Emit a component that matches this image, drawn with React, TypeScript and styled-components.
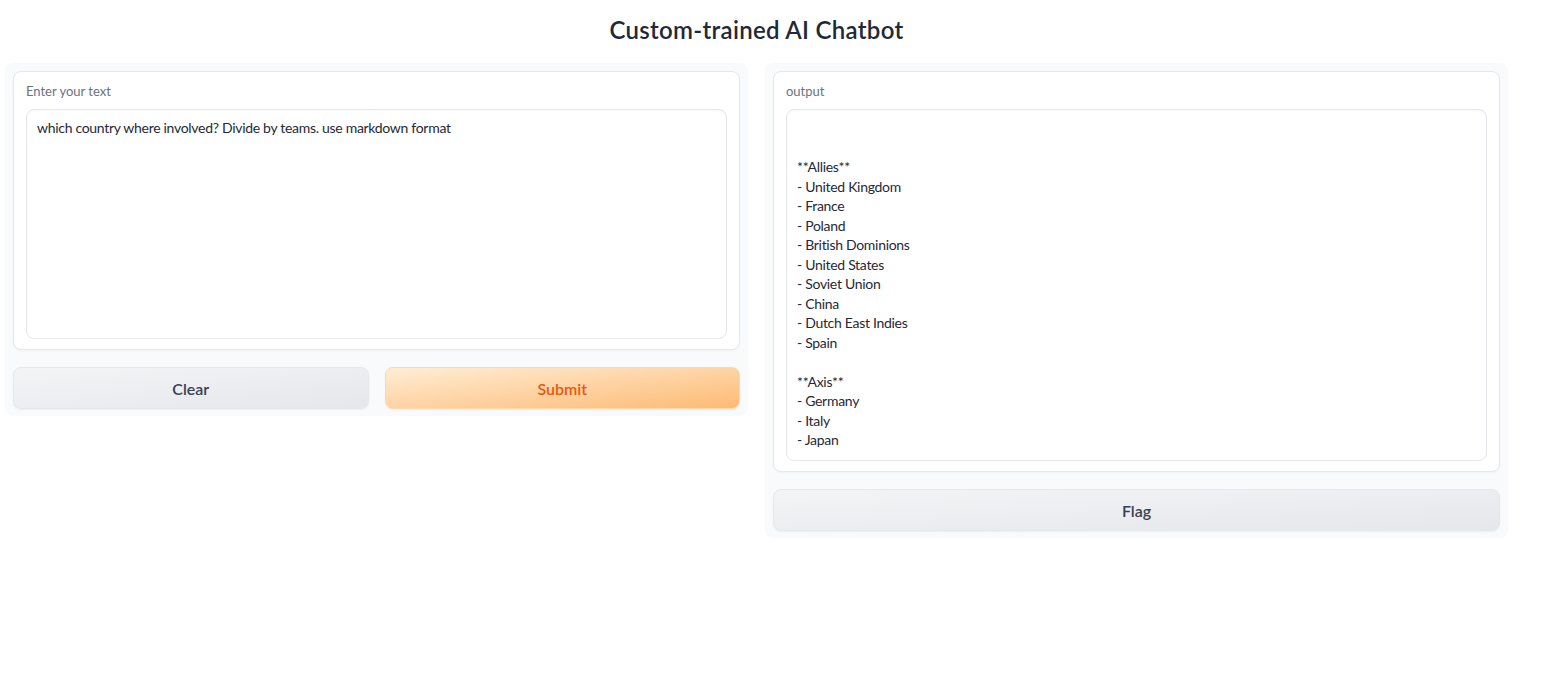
import React from "react";
import styled, { createGlobalStyle } from "styled-components";

const GlobalStyle = createGlobalStyle`
  html, body { margin: 0; padding: 0; background: #ffffff; }
  body {
    font-family: Lato, "Noto Sans", "Liberation Sans", sans-serif;
    color: #1f2937;
    -webkit-font-smoothing: antialiased;
  }
  * { box-sizing: border-box; }
`;

const Container = styled.div`
  width: 1503px;
  margin-left: 5px;
  padding-top: 14px;
  display: flex;
  flex-direction: column;
`;

const Title = styled.h1`
  margin: 0 0 18px;
  text-align: center;
  font-size: 24px;
  line-height: 31px;
  font-weight: 600;
  letter-spacing: 0.3px;
  color: #1f2937;
`;

const Columns = styled.div`
  display: grid;
  grid-template-columns: 1fr 1fr;
  gap: 17px;
  align-items: start;
`;

const Panel = styled.div`
  background: #f9fafb;
  border-radius: 8px;
  padding: 8px 8px 7px;
  display: flex;
  flex-direction: column;
  gap: 17px;
`;

const Block = styled.div`
  background: #ffffff;
  border: 1px solid #e5e7eb;
  border-radius: 8px;
  padding: 9px 12px 10px;
  box-shadow: 0 1px 2px rgba(0, 0, 0, 0.03);
  display: flex;
  flex-direction: column;
  gap: 8px;
`;

const Label = styled.span`
  font-size: 13px;
  line-height: 20px;
  color: #6b7280;
`;

const TextBox = styled.div<{ $height: number }>`
  height: ${(p) => p.$height}px;
  border: 1px solid #e5e7eb;
  border-radius: 8px;
  padding: 8px 10px;
  font-size: 14px;
  line-height: 19.5px;
  letter-spacing: -0.3px;
  color: #1f2937;
  white-space: pre-wrap;
  background: #ffffff;
  box-shadow: inset 0 1px 2px rgba(0, 0, 0, 0.04);
  overflow: hidden;
`;

const ButtonRow = styled.div`
  display: grid;
  grid-template-columns: 1fr 1fr;
  gap: 16px;
`;

const Button = styled.button<{ $primary?: boolean }>`
  height: 42px;
  border-radius: 8px;
  font-family: inherit;
  font-size: 16px;
  font-weight: 600;
  cursor: pointer;
  border: 1px solid ${(p) => (p.$primary ? "#fed7aa" : "#e5e7eb")};
  color: ${(p) => (p.$primary ? "#ea580c" : "#374151")};
  background: ${(p) =>
    p.$primary
      ? "linear-gradient(to bottom right, #ffedd5, #fdba74)"
      : "linear-gradient(to bottom right, #f3f4f6, #e5e7eb)"};
  box-shadow: 0 1px 2px rgba(0, 0, 0, 0.05);
`;

const outputText = `

**Allies**
- United Kingdom
- France
- Poland
- British Dominions
- United States
- Soviet Union
- China
- Dutch East Indies
- Spain

**Axis**
- Germany
- Italy
- Japan`;

export default function App() {
  return (
    <>
      <GlobalStyle />
      <Container>
        <Title>Custom-trained AI Chatbot</Title>
        <Columns>
          <Panel>
            <Block>
              <Label>Enter your text</Label>
              <TextBox $height={230}>
                which country where involved? Divide by teams. use markdown format
              </TextBox>
            </Block>
            <ButtonRow>
              <Button>Clear</Button>
              <Button $primary>Submit</Button>
            </ButtonRow>
          </Panel>
          <Panel>
            <Block>
              <Label>output</Label>
              <TextBox $height={352}>{outputText}</TextBox>
            </Block>
            <Button>Flag</Button>
          </Panel>
        </Columns>
      </Container>
    </>
  );
}
